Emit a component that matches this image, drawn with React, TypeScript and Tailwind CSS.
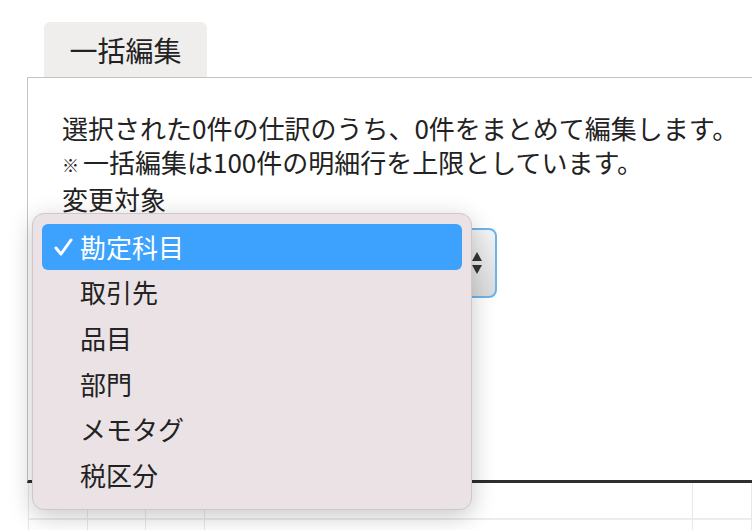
import React from "react";

const font = { fontFamily: '"Noto Sans CJK JP", "Noto Sans", sans-serif' };

export default function App() {
  const items = ["勘定科目", "取引先", "品目", "部門", "メモタグ", "税区分"];
  return (
    <div
      className="relative w-[752px] h-[530px] overflow-hidden bg-white text-[#222]"
      style={font}
    >
      <div className="pt-[22px]">
        <div className="ml-[44px] w-[163px] h-[55px] bg-[#efeeed] rounded-t-[6px] flex items-center justify-center text-[28px] leading-none">
          一括編集
        </div>
        <div className="ml-[27px] h-[406px] border-l border-t border-[#c4c4c4] border-b-[3px] border-b-[#2e2e2e] pl-[34px] pt-[33px]">
          <div className="text-[26px] leading-[34px] whitespace-nowrap">
            <div>選択された0件の仕訳のうち、0件をまとめて編集します。</div>
            <div>
              <span className="text-[17px] mr-[4px] align-[1px]">※</span>一括編集は100件の明細行を上限としています。
            </div>
            <div>変更対象</div>
          </div>
          <div className="mt-[12px] w-[435px] h-[70px] rounded-[8px] border-2 border-[#6cb4ec] bg-gradient-to-b from-[#f3f3f3] to-[#dadada] flex items-center justify-end pr-[12px]">
            <svg width="12" height="24" viewBox="0 0 12 24">
              <path d="M6 1 L11 10 L1 10 Z" fill="#333" />
              <path d="M1 14 L11 14 L6 23 Z" fill="#333" />
            </svg>
          </div>
        </div>
        <div className="ml-[28px] h-[50px] flex border-l border-[#e8e8e8]">
          {[60, 60, 60, 500, 60].map((w, i) => (
            <div
              key={i}
              className="h-full border-r border-[#e8e8e8] flex flex-col"
              style={{ width: w }}
            >
              <div className="h-[37px] border-b-2 border-[#ececec]" />
            </div>
          ))}
        </div>
      </div>

      <div className="absolute left-[32px] top-[213px] w-[440px] h-[297px] rounded-[12px] bg-[#ebe2e6] border border-[#cfc6ca] shadow-[0_6px_24px_rgba(0,0,0,0.22)] px-[9px] pt-[10px]">
        {items.map((t, i) => (
          <div
            key={t}
            className={
              "h-[45.6px] flex items-center rounded-[6px] text-[26px] leading-none " +
              (i === 0 ? "bg-[#3da2fd] text-white" : "text-[#222]")
            }
          >
            <div className="w-[38px] flex justify-center pl-[4px]">
              {i === 0 && (
                <svg width="19" height="18" viewBox="0 0 19 18">
                  <path
                    d="M2 10 L7 16 L17 2"
                    fill="none"
                    stroke="white"
                    strokeWidth="3"
                    strokeLinecap="round"
                    strokeLinejoin="round"
                  />
                </svg>
              )}
            </div>
            <span>{t}</span>
          </div>
        ))}
      </div>
    </div>
  );
}
